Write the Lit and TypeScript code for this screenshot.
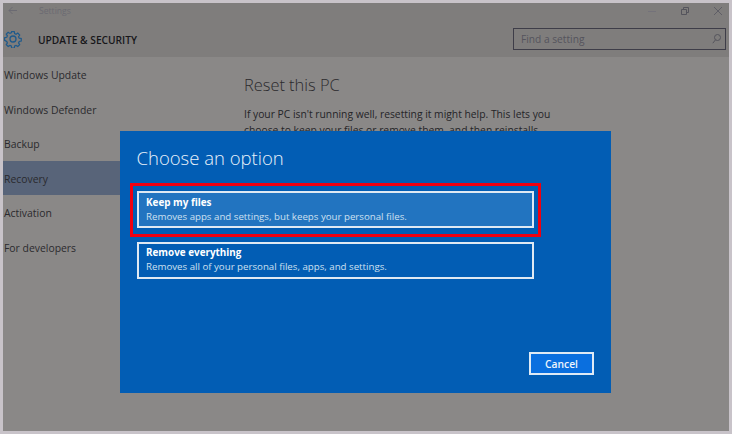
import { LitElement, html, css, svg } from "lit";
import { customElement } from "lit/decorators.js";

const NAV = ["Windows Update", "Windows Defender", "Backup", "Recovery", "Activation", "For developers"];

const gear = svg`<svg class="gear" width="18" height="18" viewBox="0 0 18 18" fill="none" stroke="#1f5a8c" stroke-width="1.3">
  <path d="M7.6 1h2.8l.4 2.2 1.5.7 1.9-1.2 2 2-1.2 1.9.7 1.5 2.2.4v2.8l-2.2.4-.7 1.5 1.2 1.9-2 2-1.9-1.2-1.5.7-.4 2.2H7.6l-.4-2.2-1.5-.7-1.9 1.2-2-2 1.2-1.9-.7-1.5L0 10.4V7.6l2.3-.4.7-1.5-1.2-1.9 2-2 1.9 1.2 1.5-.7z" transform="translate(.6 .6) scale(.93)"/>
  <circle cx="9" cy="9" r="3"/>
</svg>`;

@customElement("app-root")
export class AppRoot extends LitElement {
  static styles = css`
    :host {
      display: block;
      width: 732px;
      height: 434px;
      box-sizing: border-box;
      padding: 3px;
      position: relative;
      overflow: hidden;
      background: #c8c3c9;
      font-family: "Open Sans", "Noto Sans", sans-serif;
      color: #1f1f22;
    }
    .window {
      height: 100%;
      display: flex;
      flex-direction: column;
      background: #8a8887;
      overflow: hidden;
    }
    .top {
      flex: 0 0 54px;
      background: #7f7d7c;
      display: flex;
      flex-direction: column;
    }
    .titlebar {
      flex: 0 0 15px;
      display: flex;
      align-items: center;
      color: #6b6a72;
      font-size: 8.6px;
    }
    .back { margin-left: 5px; flex: none; }
    .title-text { flex: 1; margin-left: 22px; }
    .winctl { display: flex; align-items: center; gap: 25px; margin-right: 7px; }
    .header { display: flex; align-items: center; flex: 1; }
    .gear { margin-left: 1px; flex: none; margin-top: 3px; }
    .section {
      margin-left: 16px;
      font-size: 10.2px;
      font-weight: 600;
      color: #17171a;
      flex: 1;
      margin-top: 4px;
    }
    .search {
      width: 213px;
      height: 22px;
      box-sizing: border-box;
      margin: 3px 3px 0 0;
      border: 1px solid #3e3d48;
      display: flex;
      align-items: center;
      justify-content: space-between;
      padding: 0 4px 0 7px;
      font-size: 10.2px;
      color: #55545c;
    }
    .body { flex: 1; display: flex; }
    nav { width: 222px; flex: none; font-size: 10.4px; }
    .item {
      height: 34.6px;
      box-sizing: border-box;
      padding: 1.5px 0 0 1px;
      display: flex;
      align-items: center;
      color: #2a2a2e;
    }
    .item.on { background: #586479; }
    .content { flex: 1; padding: 16px 0 0 19px; }
    h1 { margin: 0 0 10px; font-weight: 300; font-size: 16.4px; line-height: 24px; color: #2a2a2d; }
    .content p { margin: 0; width: 330px; font-size: 10.3px; line-height: 15.6px; color: #242427; }
    .dialog {
      position: absolute;
      left: 120px;
      top: 131px;
      width: 491px;
      height: 262px;
      box-sizing: border-box;
      background: #025db4;
      padding: 13px 17px 18px 16.5px;
      display: flex;
      flex-direction: column;
      color: #fff;
    }
    h2 { margin: 0 0 20px; font-weight: 300; font-size: 18.5px; line-height: 27px; color: #eaf2fa; }
    .opts { display: flex; flex-direction: column; gap: 14px; }
    .opt {
      height: 37px;
      box-sizing: border-box;
      border: 2px solid #dfe9f3;
      padding: 1.4px 7.5px;
      width: 397px;
      position: relative;
    }
    .opt.sel { background: #2274c0; padding-top: 2.4px; }
    .opt.sel::after {
      content: "";
      position: absolute;
      inset: -10px -9px -11px -9px;
      border: 3px solid #f00010;
      pointer-events: none;
    }
    .opt b { display: block; font-size: 9.9px; line-height: 14px; font-weight: 700; color: #fff; }
    .opt span { display: block; font-size: 9.7px; line-height: 14px; margin-top: 0.6px; color: #cfe0f0; white-space: nowrap; }
    .foot { margin-top: auto; display: flex; justify-content: flex-end; }
    .cancel {
      width: 65px;
      height: 23px;
      box-sizing: border-box;
      border: 2px solid #dfeaf5;
      background: #0a6fdf;
      display: flex;
      align-items: center;
      justify-content: center;
      font-size: 10.3px;
      font-weight: 600;
      color: #eef5fc;
    }
  `;

  render() {
    return html`
      <div class="window">
        <div class="top">
          <div class="titlebar">
            <svg class="back" width="9" height="9" viewBox="0 0 9 9" fill="none" stroke="#6b6a72" stroke-width="1">
              <path d="M9 4.5H1M4.5 1 1 4.5 4.5 8" />
            </svg>
            <div class="title-text">Settings</div>
            <div class="winctl">
              <svg width="8" height="8" viewBox="0 0 8 8" stroke="#74727a"><path d="M0 4.5h8"/></svg>
              <svg width="8" height="8" viewBox="0 0 8 8" fill="none" stroke="#55545c"><path d="M.5 2.5h5v5h-5zM2.5 2.5v-2h5v5h-2"/></svg>
              <svg width="8" height="8" viewBox="0 0 8 8" stroke="#5f5e66"><path d="M0 0l8 8M8 0 0 8"/></svg>
            </div>
          </div>
          <div class="header">
            ${gear}
            <div class="section">UPDATE &amp; SECURITY</div>
            <div class="search">
              <span>Find a setting</span>
              <svg width="9" height="10" viewBox="0 0 9 10" fill="none" stroke="#55545c"><circle cx="5.5" cy="3.5" r="3"/><path d="M3.5 5.8.8 9.2"/></svg>
            </div>
          </div>
        </div>
        <div class="body">
          <nav>
            ${NAV.map((n) => html`<div class="item ${n === "Recovery" ? "on" : ""}">${n}</div>`)}
          </nav>
          <div class="content">
            <h1>Reset this PC</h1>
            <p>If your PC isn't running well, resetting it might help. This lets you choose to keep your files or remove them, and then reinstalls Windows.</p>
          </div>
        </div>
      </div>
      <div class="dialog">
        <h2>Choose an option</h2>
        <div class="opts">
          <div class="opt sel">
            <b>Keep my files</b>
            <span>Removes apps and settings, but keeps your personal files.</span>
          </div>
          <div class="opt">
            <b>Remove everything</b>
            <span>Removes all of your personal files, apps, and settings.</span>
          </div>
        </div>
        <div class="foot"><div class="cancel">Cancel</div></div>
      </div>
    `;
  }
}
